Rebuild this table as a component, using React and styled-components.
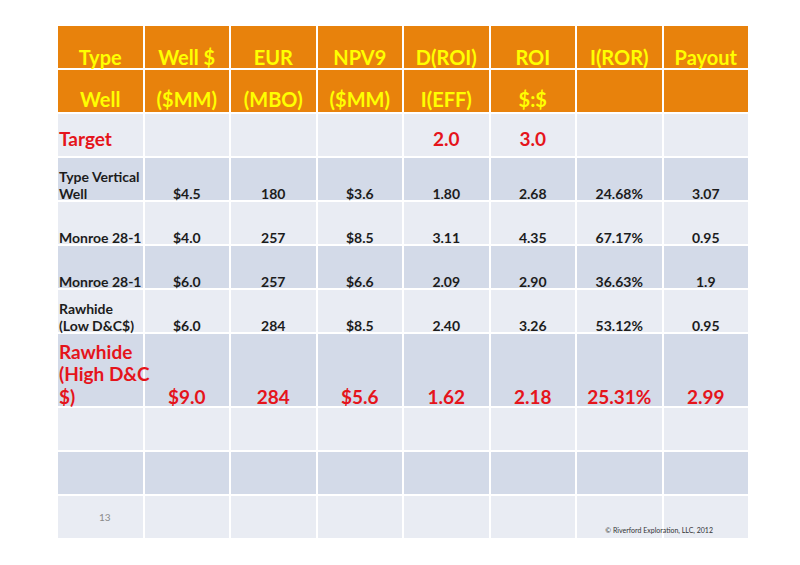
import styled, { createGlobalStyle } from 'styled-components';

const GlobalStyle = createGlobalStyle`
	body {
		margin: 0;
		background: #fff;
		font-family: Lato, 'Open Sans', sans-serif;
	}
`;

const header = [
	['Type', 'Well $', 'EUR', 'NPV9', 'D(ROI)', 'ROI', 'I(ROR)', 'Payout'],
	['Well', '($MM)', '(MBO)', '($MM)', 'I(EFF)', '$:$', '', ''],
];

const rows = [
	{ label: ['Target'], values: ['', '', '', '2.0', '3.0', '', ''], red: true, pad: 8 },
	{ label: ['Type Vertical', 'Well'], values: ['$4.5', '180', '$3.6', '1.80', '2.68', '24.68%', '3.07'], dark: true },
	{ label: ['Monroe 28-1'], values: ['$4.0', '257', '$8.5', '3.11', '4.35', '67.17%', '0.95'] },
	{ label: ['Monroe 28-1'], values: ['$6.0', '257', '$6.6', '2.09', '2.90', '36.63%', '1.9'], dark: true },
	{ label: ['Rawhide', '(Low D&C$)'], values: ['$6.0', '284', '$8.5', '2.40', '3.26', '53.12%', '0.95'] },
	{ label: ['Rawhide', '(High D&C', '$)'], values: ['$9.0', '284', '$5.6', '1.62', '2.18', '25.31%', '2.99'], dark: true, red: true, height: 72 },
	{ label: [], values: ['', '', '', '', '', '', ''] },
	{ label: [], values: ['', '', '', '', '', '', ''], dark: true },
];

const App = () => {
	return (
		<Page>
			<GlobalStyle />
			<Table>
				{header.map((cells, i) => (
					<Row key={'h' + i}>
						{cells.map((text, j) => (
							<HeaderCell key={j} $pad={i === 0 ? 0 : 2}>
								{text}
							</HeaderCell>
						))}
					</Row>
				))}
				{rows.map((row, i) => (
					<Row key={i} $height={row.height}>
						<LabelCell $dark={row.dark} $red={row.red} $pad={row.pad}>
							<Text>
								{row.label.map((line, k) => (
									<span key={k}>
										{line}
										{k < row.label.length - 1 && <br />}
									</span>
								))}
							</Text>
						</LabelCell>
						{row.values.map((v, j) => (
							<DataCell key={j} $dark={row.dark} $red={row.red} $pad={row.pad}>
								<Text>{v}</Text>
							</DataCell>
						))}
					</Row>
				))}
				<Row>
					<SlideNumberCell>13</SlideNumberCell>
					{Array.from({ length: 7 }).map((_, j) => (
						<DataCell key={j} />
					))}
				</Row>
				<Copyright>© Riverford Exploration, LLC, 2012</Copyright>
			</Table>
		</Page>
	);
};

export default App;

const Page = styled.div`
	width: 800px;
	height: 565px;
	padding: 26px 0 0 58px;
	box-sizing: border-box;
`;

const Table = styled.div`
	position: relative;
	width: 690px;
	display: flex;
	flex-direction: column;
	gap: 2px;
`;

const Row = styled.div`
	display: grid;
	grid-template-columns: repeat(8, minmax(0, 1fr));
	gap: 2px;
	height: ${p => p.$height || 42}px;
`;

const Text = styled.span`
	display: block;
	margin-bottom: -3px;
`;

const Cell = styled.div`
	display: flex;
	align-items: flex-end;
	justify-content: center;
	white-space: nowrap;
	font-weight: 700;
	background: ${p => (p.$dark ? '#d3dae8' : '#e9ecf3')};
	color: ${p => (p.$red ? '#e5141b' : '#1c1c1c')};
	font-size: ${p => (p.$red ? '19px' : '14px')};
	line-height: 1.2;
	padding-bottom: ${p => p.$pad || 0}px;
`;

const HeaderCell = styled.div`
	display: flex;
	align-items: flex-end;
	justify-content: center;
	background: #e8820c;
	color: #ffff00;
	font-size: 20px;
	font-weight: 700;
	line-height: 1.1;
	white-space: nowrap;
	padding-bottom: ${p => p.$pad}px;
`;

const LabelCell = styled(Cell)`
	position: relative;
	z-index: 1;
	justify-content: flex-start;
	padding-left: 1px;
`;

const DataCell = styled(Cell)``;

const SlideNumberCell = styled(Cell)`
	align-items: flex-start;
	padding-top: 15px;
	padding-left: 9px;
	color: #8a8a8a;
	font-size: 10px;
	font-weight: 400;
`;

const Copyright = styled.div`
	position: absolute;
	right: 35px;
	bottom: 4px;
	font-size: 7px;
	color: #333;
	white-space: nowrap;
`;
